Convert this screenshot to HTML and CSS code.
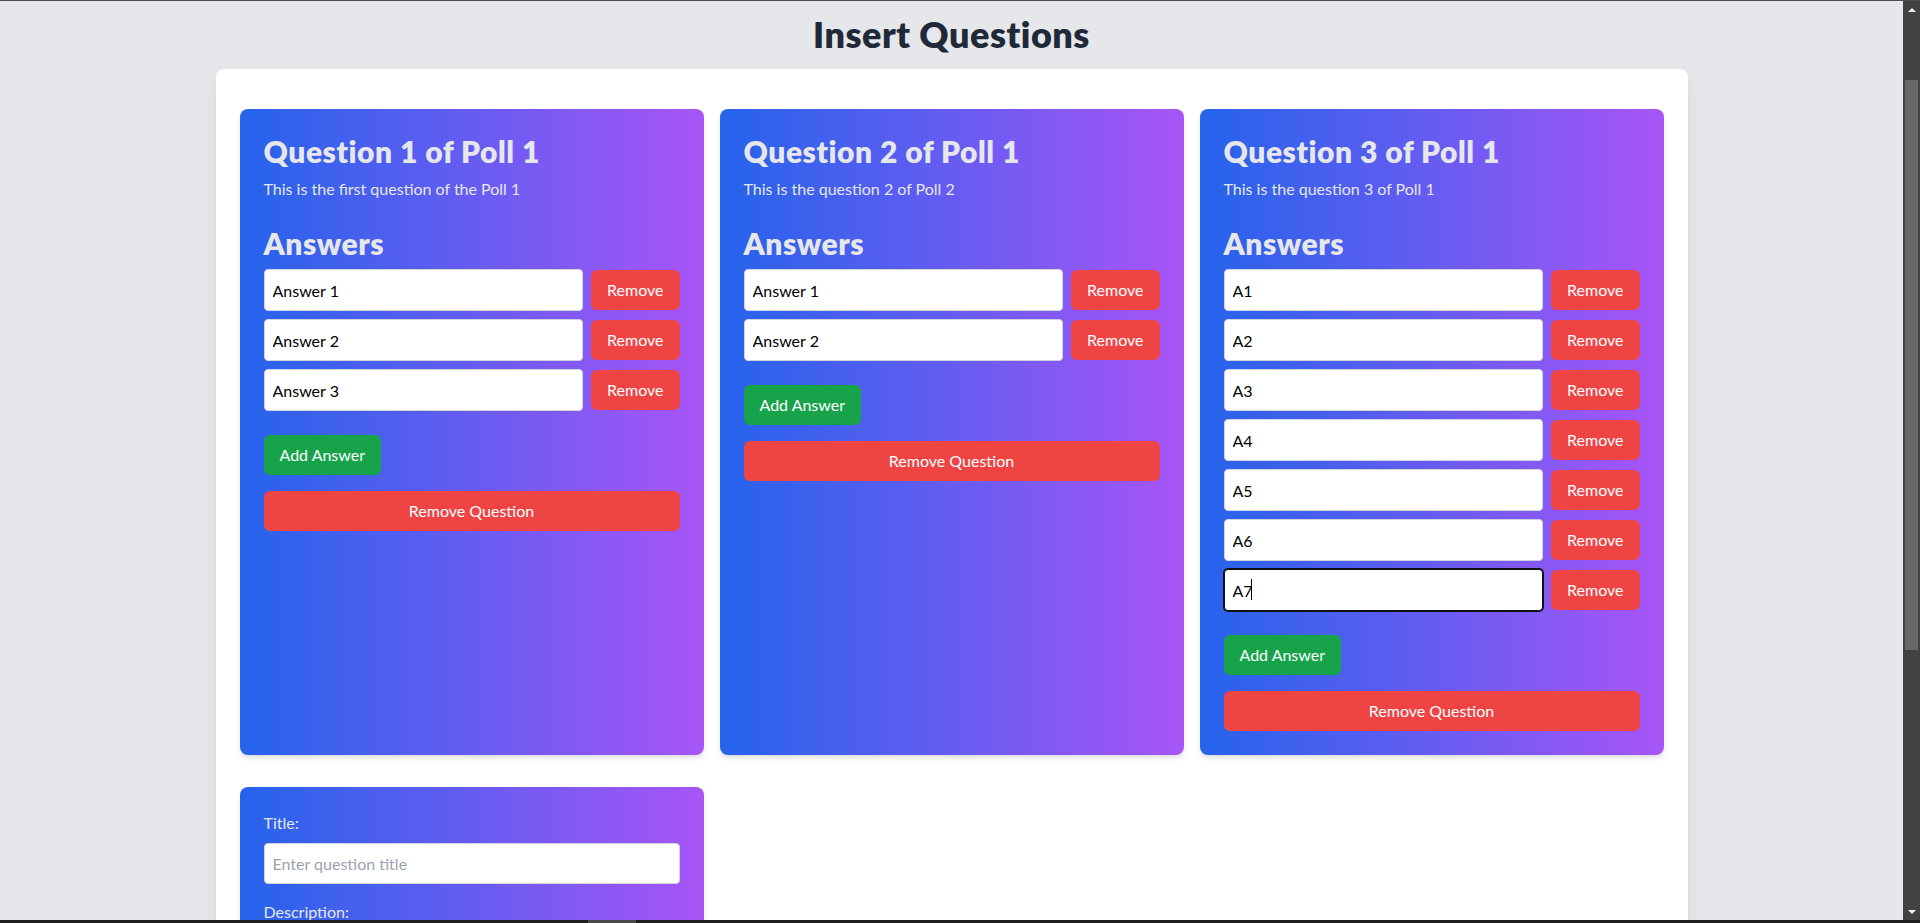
FILE: index.html
```html
<!DOCTYPE html>
<html lang="en">
<head>
<meta charset="utf-8">
<title>Insert Questions</title>
<link rel="stylesheet" href="styles.css">
</head>
<body>
<div class="window">
  <main class="viewport">
    <h1 class="page-title">Insert Questions</h1>
    <section class="panel">
      <div class="question-grid">
        <article class="card">
          <h2 class="card-title">Question 1 of Poll 1</h2>
          <p class="card-desc">This is the first question of the Poll 1</p>
          <h2 class="answers-title">Answers</h2>
          <div class="answer-row"><input class="field" type="text" value="Answer 1"><button class="btn btn-red">Remove</button></div>
          <div class="answer-row"><input class="field" type="text" value="Answer 2"><button class="btn btn-red">Remove</button></div>
          <div class="answer-row"><input class="field" type="text" value="Answer 3"><button class="btn btn-red">Remove</button></div>
          <button class="btn btn-green add-btn">Add Answer</button>
          <button class="btn btn-red remove-q">Remove Question</button>
        </article>
        <article class="card">
          <h2 class="card-title">Question 2 of Poll 1</h2>
          <p class="card-desc">This is the question 2 of Poll 2</p>
          <h2 class="answers-title">Answers</h2>
          <div class="answer-row"><input class="field" type="text" value="Answer 1"><button class="btn btn-red">Remove</button></div>
          <div class="answer-row"><input class="field" type="text" value="Answer 2"><button class="btn btn-red">Remove</button></div>
          <button class="btn btn-green add-btn">Add Answer</button>
          <button class="btn btn-red remove-q">Remove Question</button>
        </article>
        <article class="card">
          <h2 class="card-title">Question 3 of Poll 1</h2>
          <p class="card-desc">This is the question 3 of Poll 1</p>
          <h2 class="answers-title">Answers</h2>
          <div class="answer-row"><input class="field" type="text" value="A1"><button class="btn btn-red">Remove</button></div>
          <div class="answer-row"><input class="field" type="text" value="A2"><button class="btn btn-red">Remove</button></div>
          <div class="answer-row"><input class="field" type="text" value="A3"><button class="btn btn-red">Remove</button></div>
          <div class="answer-row"><input class="field" type="text" value="A4"><button class="btn btn-red">Remove</button></div>
          <div class="answer-row"><input class="field" type="text" value="A5"><button class="btn btn-red">Remove</button></div>
          <div class="answer-row"><input class="field" type="text" value="A6"><button class="btn btn-red">Remove</button></div>
          <div class="answer-row">
            <div class="field-wrap"><input class="field field-focused" type="text" value="A7"><span class="caret"></span></div>
            <button class="btn btn-red">Remove</button>
          </div>
          <button class="btn btn-green add-btn">Add Answer</button>
          <button class="btn btn-red remove-q">Remove Question</button>
        </article>
      </div>
      <div class="new-grid">
        <form class="card">
          <label class="label" for="qtitle">Title:</label>
          <input class="field form-field" id="qtitle" type="text" placeholder="Enter question title">
          <label class="label" for="qdesc">Description:</label>
          <textarea class="field form-area" id="qdesc" placeholder="Enter question description"></textarea>
        </form>
      </div>
    </section>
  </main>
  <div class="scrollbar">
    <div class="sb-btn"><span class="tri-up"></span></div>
    <div class="sb-thumb"></div>
    <div class="sb-fill"></div>
    <div class="sb-btn"><span class="tri-down"></span></div>
  </div>
</div>
<div class="taskbar"><div class="taskbar-seg"></div></div>
</body>
</html>
```
FILE: styles.css
```css
* { box-sizing: border-box; }

html, body {
  margin: 0;
  height: 923px;
  overflow: hidden;
}

body {
  background: #e5e7eb;
  border-top: 1px solid #4b4b4b;
  font-family: Lato, "Open Sans", sans-serif;
  color: #1f2937;
  display: flex;
  flex-direction: column;
}

.window {
  flex: 1;
  display: flex;
  min-height: 0;
}

.viewport {
  flex: 1;
  min-width: 0;
  overflow: hidden;
  padding-top: 13px;
}

.page-title {
  margin: 0 0 15px;
  text-align: center;
  font-size: 36px;
  line-height: 40px;
  font-weight: 800;
  letter-spacing: 0.5px;
  color: #1f2937;
}

.panel {
  width: 1472px;
  margin: 0 auto;
  padding: 40px 24px;
  background: #fff;
  border-radius: 8px;
  box-shadow: 0 10px 15px -3px rgba(0,0,0,.1), 0 4px 6px -4px rgba(0,0,0,.1);
}

.question-grid,
.new-grid {
  display: grid;
  grid-template-columns: repeat(3, 1fr);
  gap: 16px;
  align-items: stretch;
}

.new-grid {
  margin-top: 32px;
  align-items: start;
}

.card {
  display: flex;
  flex-direction: column;
  padding: 24px;
  border-radius: 8px;
  background: linear-gradient(to right, #2563eb, #a855f7);
  box-shadow: 0 4px 6px -1px rgba(0,0,0,.1), 0 2px 4px -2px rgba(0,0,0,.1);
  margin: 0;
}

.card-title,
.answers-title {
  margin: 0;
  font-size: 30px;
  line-height: 36px;
  font-weight: 800;
  letter-spacing: 0.5px;
  color: #e5e7eb;
}

.card-desc {
  margin: 8px 0 0;
  font-size: 16px;
  line-height: 24px;
  color: #e5e7eb;
}

.answers-title {
  margin: 24px 0 8px;
}

.answer-row {
  display: flex;
  align-items: center;
  gap: 8px;
  margin-bottom: 8px;
}

.field {
  flex: 1;
  min-width: 0;
  height: 42px;
  padding: 8px;
  border: 1px solid #d1d5db;
  border-radius: 4px;
  background: #fff;
  font-family: inherit;
  font-size: 16px;
  line-height: 24px;
  color: #000;
  outline: none;
}

.field::placeholder {
  color: #9ca3af;
}

.field-wrap {
  flex: 1;
  min-width: 0;
  display: flex;
  position: relative;
}

.field-focused {
  border-color: #101010;
  box-shadow: 0 0 0 1px #101010;
}

.caret {
  position: absolute;
  left: 27px;
  top: 10px;
  width: 1px;
  height: 21px;
  background: #000;
}

.btn {
  border: none;
  border-radius: 6px;
  padding: 8px 16px;
  font-family: inherit;
  font-size: 16px;
  line-height: 24px;
  color: #fff;
  cursor: pointer;
}

.btn-red { background: #ef4444; }
.btn-green { background: #16a34a; }

.add-btn {
  align-self: flex-start;
  margin-top: 16px;
}

.remove-q {
  margin-top: 16px;
}

.label {
  display: block;
  font-size: 16px;
  line-height: 24px;
  color: #e5e7eb;
  margin-bottom: 8px;
}

.form-field {
  flex: none;
  width: 100%;
  height: 41px;
  margin-bottom: 16px;
}

.form-area {
  flex: none;
  width: 100%;
  height: 96px;
  resize: none;
}

.scrollbar {
  width: 17px;
  background: #424242;
  display: flex;
  flex-direction: column;
  align-items: center;
}

.sb-btn {
  height: 17px;
  width: 17px;
  display: flex;
  align-items: center;
  justify-content: center;
  flex: none;
}

.tri-up {
  width: 0;
  height: 0;
  border-left: 4px solid transparent;
  border-right: 4px solid transparent;
  border-bottom: 4px solid #f0f0f0;
}

.tri-down {
  width: 0;
  height: 0;
  border-left: 4px solid transparent;
  border-right: 4px solid transparent;
  border-top: 4px solid #f0f0f0;
}

.sb-thumb {
  flex: none;
  width: 13px;
  height: 570px;
  margin-top: 62px;
  background: #686868;
}

.sb-fill { flex: 1; }

.taskbar {
  height: 3px;
  flex: none;
  background: #1e1e1e;
  display: flex;
}

.taskbar-seg {
  width: 48px;
  margin-left: 588px;
  background: #4a4a4a;
}
```
